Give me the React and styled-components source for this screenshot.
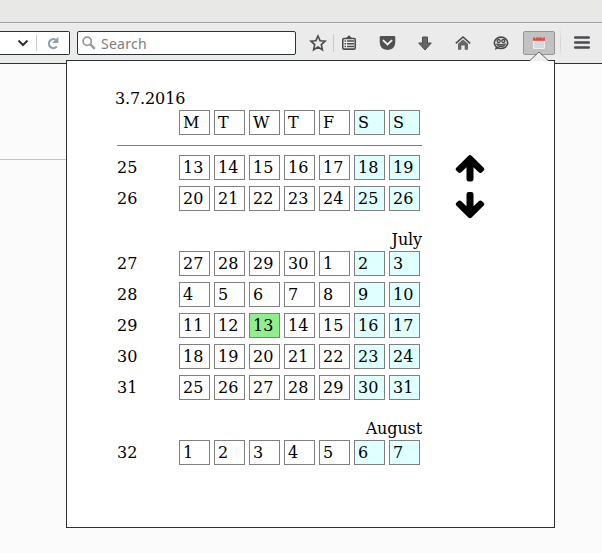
import React from "react";
import styled, { createGlobalStyle } from "styled-components";

const Global = createGlobalStyle`
  * { box-sizing: border-box; }
  html, body { margin: 0; background: #fbfbfb; overflow: hidden; }
`;

const Browser = styled.div`
  position: relative;
  width: 602px;
  height: 553px;
  overflow: hidden;
  background: #fbfbfb;
  font-family: "DejaVu Serif", serif;
  font-size: 16px;
  line-height: 19px;
  color: #000;
`;

const TabStrip = styled.div`
  height: 23px;
  background: #e8e8e6;
  border-bottom: 1px solid #9f9f9f;
`;

const Toolbar = styled.div`
  display: flex;
  align-items: flex-start;
  height: 41px;
  padding-top: 7px;
  background: #ebebeb;
  border-top: 1px solid #f3f3f3;
  border-bottom: 1px solid #2b3235;
`;

const Field = styled.div`
  display: flex;
  align-items: center;
  height: 24px;
  background: #fff;
  border: 1px solid #2b3235;
  border-radius: 2px;
`;

const UrlField = styled(Field)`
  width: 70px;
  border-left: 0;
  border-radius: 0 2px 2px 0;
`;

const SearchField = styled(Field)`
  width: 219px;
  margin-left: 7px;
  padding-left: 4px;
  font-family: "Noto Sans", sans-serif;
  font-size: 14px;
  letter-spacing: 0.25px;
  color: #7d7d7d;
`;

const SearchLabel = styled.span`
  margin-left: 5px;
`;

const Divider = styled.span`
  flex: none;
  width: 1px;
  height: ${(p) => p.$h}px;
  margin-left: ${(p) => p.$gap}px;
  background: #c8cbcd;
`;

const Icon = styled.svg`
  display: block;
  flex: none;
  width: ${(p) => p.$w || 18}px;
  height: ${(p) => p.$h || 18}px;
  margin-left: ${(p) => p.$gap || 0}px;
`;

const Tools = styled.div`
  display: flex;
  align-items: center;
  height: 24px;
  margin-left: 13px;
`;

const ActiveButton = styled.div`
  display: flex;
  justify-content: center;
  width: 32px;
  height: 24px;
  margin-left: 14px;
  padding-top: 4px;
  background: #c2c2c2;
  border: 1px solid #959595;
  border-radius: 2px;
`;

const MenuDivider = styled.span`
  width: 1px;
  height: 32px;
  margin-left: 5px;
  background: linear-gradient(#ebebeb, #d2d2d2, #ebebeb);
`;

const PageRule = styled.div`
  margin-top: 95px;
  height: 1px;
  width: 66px;
  background: #c4c4c4;
`;

const Popup = styled.div`
  position: absolute;
  left: 66px;
  top: 60px;
  display: flex;
  align-items: flex-start;
  width: 489px;
  height: 468px;
  padding: 28px 0 0 50px;
  background: #fff;
  border: 1px solid #2b3133;
`;

const PopupArrow = styled.svg`
  position: absolute;
  left: 462px;
  top: -10px;
  width: 20px;
  height: 10px;
`;

const Calendar = styled.div`
  width: 305px;
`;

const Today = styled.div`
  margin: 0 0 2px -2px;
  letter-spacing: -0.12px;
`;

const Rule = styled.div`
  height: 1px;
  margin: 10px 0 9px;
  background: #808080;
`;

const Weeks = styled.div`
  display: grid;
  row-gap: 6px;
`;

const Week = styled.div`
  display: grid;
  grid-template-columns: 58px repeat(7, 31px);
  column-gap: 4px;
  height: 25px;
`;

const WeekNumber = styled.div`
  padding-top: 3px;
`;

const Day = styled.div`
  padding: 2px 3px;
  border: 1px solid #808080;
  background: ${(p) => (p.$today ? "#90ee90" : p.$weekend ? "#e0ffff" : "#fff")};
`;

const MonthName = styled.div`
  margin: 19px 0 2px;
  text-align: right;
  letter-spacing: -0.12px;
`;

const Pager = styled.div`
  display: grid;
  row-gap: 10px;
  margin: 66px 0 0 33px;
`;

const months = [
  { weeks: [[25, [13, 14, 15, 16, 17, 18, 19]], [26, [20, 21, 22, 23, 24, 25, 26]]] },
  {
    name: "July",
    weeks: [
      [27, [27, 28, 29, 30, 1, 2, 3]],
      [28, [4, 5, 6, 7, 8, 9, 10]],
      [29, [11, 12, 13, 14, 15, 16, 17]],
      [30, [18, 19, 20, 21, 22, 23, 24]],
      [31, [25, 26, 27, 28, 29, 30, 31]],
    ],
  },
  { name: "August", weeks: [[32, [1, 2, 3, 4, 5, 6, 7]]] },
];

function WeekRow({ number, days }) {
  return (
    <Week>
      <WeekNumber>{number}</WeekNumber>
      {days.map((d, i) => (
        <Day key={i} $weekend={i > 4} $today={number === 29 && d === 13}>{d}</Day>
      ))}
    </Week>
  );
}

function Arrow({ down }) {
  return (
    <Icon $w={30} $h={27} viewBox="0 0 30 27">
      <path
        d="M11.5 12.2L6.3 17.2Q4.6 18.6 3 17.2L1.3 15.6Q0 14.2 1.3 12.8L13.4 0.8Q15 -0.6 16.6 0.8L28.7 12.8Q30 14.2 28.7 15.6L27 17.2Q25.4 18.6 23.7 17.2L18.5 12.2V24.2Q18.5 26.4 16.3 26.4H13.7Q11.5 26.4 11.5 24.2Z"
        transform={down ? "rotate(180 15 13.2)" : undefined}
        fill="#000"
      />
    </Icon>
  );
}

function NavigationBar() {
  return (
    <Toolbar>
      <UrlField>
        <Icon $w={12} $h={8} $gap={17} viewBox="0 0 12 8">
          <path d="M1.5 1.5L6 6L10.5 1.5" fill="none" stroke="#333" strokeWidth="2" />
        </Icon>
        <Divider $h={16} $gap={7} />
        <Icon $w={14} $h={14} $gap={9} viewBox="0 0 14 14">
          <path d="M10.8 10.6A4.5 4.5 0 1 1 9.6 3.6" fill="none" stroke="#93a0ad" strokeWidth="2.2" />
          <path d="M12.4 0.8V7H6.2L8.1 5.1L10.3 2.8Z" fill="#93a0ad" />
        </Icon>
      </UrlField>
      <SearchField>
        <Icon $w={14} $h={14} viewBox="0 0 14 14">
          <circle cx="5.2" cy="5.2" r="4.1" fill="none" stroke="#999" strokeWidth="1.8" />
          <path d="M8.2 8.2L12.8 12.8" stroke="#999" strokeWidth="2.4" />
        </Icon>
        <SearchLabel>Search</SearchLabel>
      </SearchField>
      <Tools>
        <Icon viewBox="0 0 18 18">
          <path d="M9 2L11.1 6.7L16.1 7.2L12.3 10.6L13.4 15.8L9 13L4.6 15.8L5.7 10.6L1.9 7.2L6.9 6.7Z" fill="none" stroke="#4c4c4c" strokeWidth="1.6" />
        </Icon>
        <Divider $h={18} $gap={6} />
        <Icon $w={14} $h={16} $gap={8} viewBox="0 0 14 16">
          <path d="M3.5 3.5L7 0.3L10.5 3.5Z" fill="#4c4c4c" />
          <rect x="0.8" y="3.5" width="12.4" height="10.6" rx="1" fill="#f2f2f2" stroke="#4c4c4c" strokeWidth="1.6" />
          <path d="M2.5 6H4M5 6H12M2.5 8.8H4M5 8.8H12M2.5 11.6H4M5 11.6H12" stroke="#4c4c4c" strokeWidth="1.5" />
        </Icon>
        <Icon $w={17} $h={16} $gap={23} viewBox="0 0 17 16">
          <path d="M2 1H15Q16.3 1 16.3 2.4V7Q16.3 14.5 8.5 15Q0.7 14.5 0.7 7V2.4Q0.7 1 2 1Z" fill="#505050" />
          <path d="M4.5 5.6L8.5 9.4L12.5 5.6" fill="none" stroke="#eee" strokeWidth="2" strokeLinecap="round" />
        </Icon>
        <Icon $w={14} $h={15} $gap={22} viewBox="0 0 14 15">
          <path d="M4.5 1H9.5V7H13.3L7 14L0.7 7H4.5Z" fill="#666" stroke="#4c4c4c" />
        </Icon>
        <Icon $w={16} $h={16} $gap={23} viewBox="0 0 16 16">
          <path d="M3 8.8L8 4.5L13 8.8V14.7H9.7V10.5H6.3V14.7H3Z" fill="#666" />
          <path d="M0.8 8.4L8 2L15.2 8.4" fill="none" stroke="#4c4c4c" strokeWidth="1.6" />
        </Icon>
        <Icon $w={16} $h={15} $gap={22} viewBox="0 0 16 15">
          <path d="M3 10.5L1.8 14L6 12" fill="#484848" />
          <ellipse cx="8" cy="6.8" rx="6.7" ry="5.7" fill="#dedede" stroke="#484848" strokeWidth="1.6" />
          <circle cx="5.7" cy="5" r="1.5" fill="none" stroke="#484848" strokeWidth="1.3" />
          <circle cx="10.3" cy="5" r="1.5" fill="none" stroke="#484848" strokeWidth="1.3" />
          <path d="M3.5 7.9Q8 9.3 12.5 7.9Q11.3 10.8 8 10.8Q4.7 10.8 3.5 7.9Z" fill="#777" stroke="#484848" />
        </Icon>
        <ActiveButton>
          <Icon $w={14} $h={14} viewBox="0 0 14 14">
            <path d="M1.5 5H12.5V12.5H1.5Z" fill="#d3dbde" stroke="#edf0f1" />
            <path d="M1 1.5H13V4.8H1Z" fill="#e74c3c" />
            <path d="M3.5 0.5V2.5M10.5 0.5V2.5" stroke="#e9b0a9" strokeWidth="1" />
          </Icon>
        </ActiveButton>
        <MenuDivider />
        <Icon $w={18} $h={16} $gap={12} viewBox="0 0 18 16">
          <path d="M2.3 2.5H15.7M2.3 7.5H15.7M2.3 12.5H15.7" stroke="#4b4b4f" strokeWidth="2.7" strokeLinecap="round" />
        </Icon>
      </Tools>
    </Toolbar>
  );
}

export default function App() {
  return (
    <Browser>
      <Global />
      <TabStrip />
      <NavigationBar />
      <PageRule />
      <Popup>
        <PopupArrow viewBox="0 0 20 10">
          <path d="M0.5 10L10 1L19.5 10Z" fill="#f0f0f0" />
          <path d="M0.5 9.8L10 1L19.5 9.8" fill="none" stroke="#63686a" />
        </PopupArrow>
        <Calendar>
          <Today>3.7.2016</Today>
          <Week>
            <WeekNumber />
            {["M", "T", "W", "T", "F", "S", "S"].map((d, i) => (
              <Day key={i} $weekend={i > 4}>{d}</Day>
            ))}
          </Week>
          <Rule />
          {months.map((m, i) => (
            <React.Fragment key={i}>
              {m.name && <MonthName>{m.name}</MonthName>}
              <Weeks>
                {m.weeks.map(([n, days]) => <WeekRow key={n} number={n} days={days} />)}
              </Weeks>
            </React.Fragment>
          ))}
        </Calendar>
        <Pager>
          <Arrow />
          <Arrow down />
        </Pager>
      </Popup>
    </Browser>
  );
}
